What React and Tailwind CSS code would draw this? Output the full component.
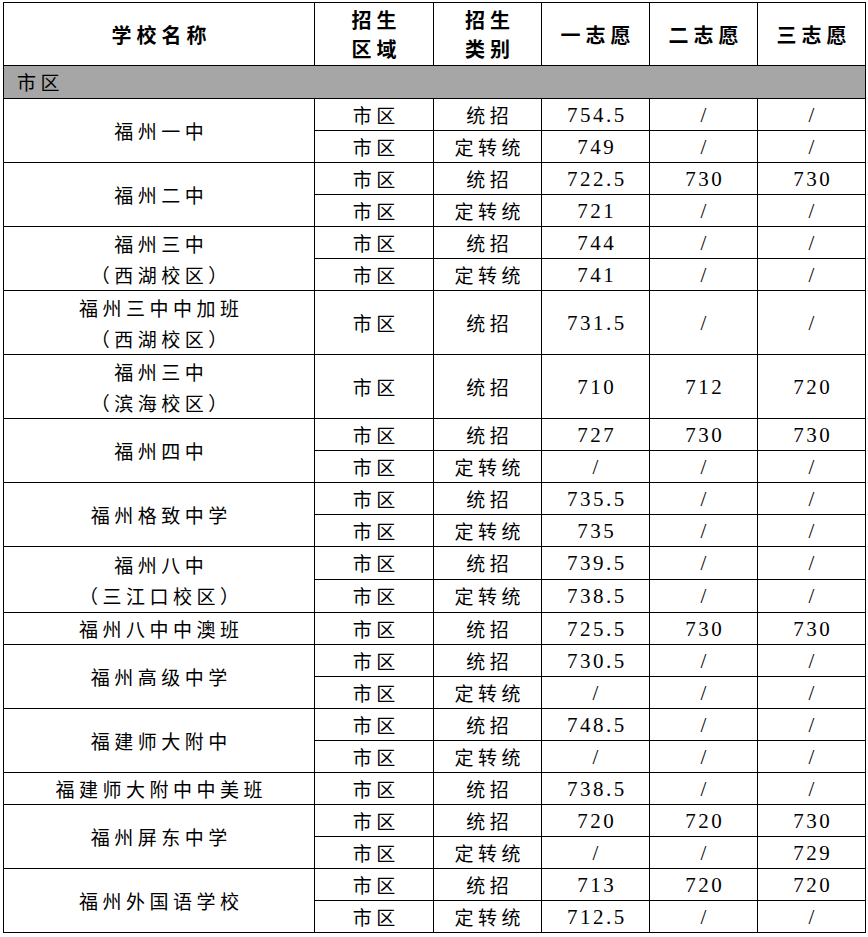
import React from 'react';

const rows = [
  { name: ['福州一中'], sub: [['统招', '754.5', '/', '/'], ['定转统', '749', '/', '/']] },
  { name: ['福州二中'], sub: [['统招', '722.5', '730', '730'], ['定转统', '721', '/', '/']] },
  { name: ['福州三中', '（西湖校区）'], sub: [['统招', '744', '/', '/'], ['定转统', '741', '/', '/']] },
  { name: ['福州三中中加班', '（西湖校区）'], sub: [['统招', '731.5', '/', '/']], tall: true },
  { name: ['福州三中', '（滨海校区）'], sub: [['统招', '710', '712', '720']], tall: true },
  { name: ['福州四中'], sub: [['统招', '727', '730', '730'], ['定转统', '/', '/', '/']] },
  { name: ['福州格致中学'], sub: [['统招', '735.5', '/', '/'], ['定转统', '735', '/', '/']] },
  { name: ['福州八中', '（三江口校区）'], sub: [['统招', '739.5', '/', '/'], ['定转统', '738.5', '/', '/']], h: 33 },
  { name: ['福州八中中澳班'], sub: [['统招', '725.5', '730', '730']] },
  { name: ['福州高级中学'], sub: [['统招', '730.5', '/', '/'], ['定转统', '/', '/', '/']] },
  { name: ['福建师大附中'], sub: [['统招', '748.5', '/', '/'], ['定转统', '/', '/', '/']] },
  { name: ['福建师大附中中美班'], sub: [['统招', '738.5', '/', '/']] },
  { name: ['福州屏东中学'], sub: [['统招', '720', '720', '730'], ['定转统', '/', '/', '729']] },
  { name: ['福州外国语学校'], sub: [['统招', '713', '720', '720'], ['定转统', '712.5', '/', '/']] },
];

const cjk = "font-['Noto_Sans_CJK_SC',sans-serif]";
const cell = 'border border-black p-0 text-center align-middle text-black';
const cjkText = `${cjk} text-[19px] leading-[28px] tracking-[4.5px] pl-[4.5px]`;
const numText = "font-['Liberation_Serif','Noto_Sans_CJK_SC',serif] text-[21px] leading-[28px] tracking-[2.5px] pl-[2.5px]";

function NumCell({ v }) {
  return <td className={`${cell} ${numText}`}>{v}</td>;
}

function Name({ lines }) {
  if (lines.length === 1) return lines[0];
  return lines.map((n, k) => (
    <div key={k} className="leading-[31px]">
      {n}
    </div>
  ));
}

export default function App() {
  const body = [];
  rows.forEach((r, i) => {
    const h = r.h || 32;
    if (r.tall) {
      const s = r.sub[0];
      body.push(
        <tr key={i} style={{ height: 64 }}>
          <td className={`${cell} ${cjkText}`}>
            <Name lines={r.name} />
          </td>
          <td className={`${cell} ${cjkText}`}>市区</td>
          <td className={`${cell} ${cjkText}`}>{s[0]}</td>
          <NumCell v={s[1]} />
          <NumCell v={s[2]} />
          <NumCell v={s[3]} />
        </tr>
      );
    } else {
      r.sub.forEach((s, j) => {
        body.push(
          <tr key={`${i}-${j}`} style={{ height: h }}>
            {j === 0 && (
              <td rowSpan={r.sub.length} className={`${cell} ${cjkText}`}>
                <Name lines={r.name} />
              </td>
            )}
            <td className={`${cell} ${cjkText}`}>市区</td>
            <td className={`${cell} ${cjkText}`}>{s[0]}</td>
            <NumCell v={s[1]} />
            <NumCell v={s[2]} />
            <NumCell v={s[3]} />
          </tr>
        );
      });
    }
  });

  const headText = `${cjk} text-[20px] font-bold leading-[29px] tracking-[5px] pl-[5px]`;

  return (
    <div className="w-[868px] h-[937px] bg-white overflow-hidden pt-[2px] pl-[3px]">
      <table className="table-fixed border-collapse w-[862px]">
        <colgroup>
          <col className="w-[311px]" />
          <col className="w-[119px]" />
          <col className="w-[108px]" />
          <col className="w-[108px]" />
          <col className="w-[108px]" />
          <col className="w-[108px]" />
        </colgroup>
        <tbody>
          <tr style={{ height: 63 }}>
            <td className={`${cell} ${headText}`}>学校名称</td>
            <td className={`${cell} ${headText}`}>
              <div>招生</div>
              <div>区域</div>
            </td>
            <td className={`${cell} ${headText}`}>
              <div>招生</div>
              <div>类别</div>
            </td>
            <td className={`${cell} ${headText}`}>一志愿</td>
            <td className={`${cell} ${headText}`}>二志愿</td>
            <td className={`${cell} ${headText}`}>三志愿</td>
          </tr>
          <tr style={{ height: 33 }}>
            <td colSpan={6} className={`border border-black bg-[#a6a6a6] text-left align-middle pl-[13px] ${cjk} text-[19px] leading-[28px] tracking-[4.5px] text-black`}>
              市区
            </td>
          </tr>
          {body}
        </tbody>
      </table>
    </div>
  );
}
